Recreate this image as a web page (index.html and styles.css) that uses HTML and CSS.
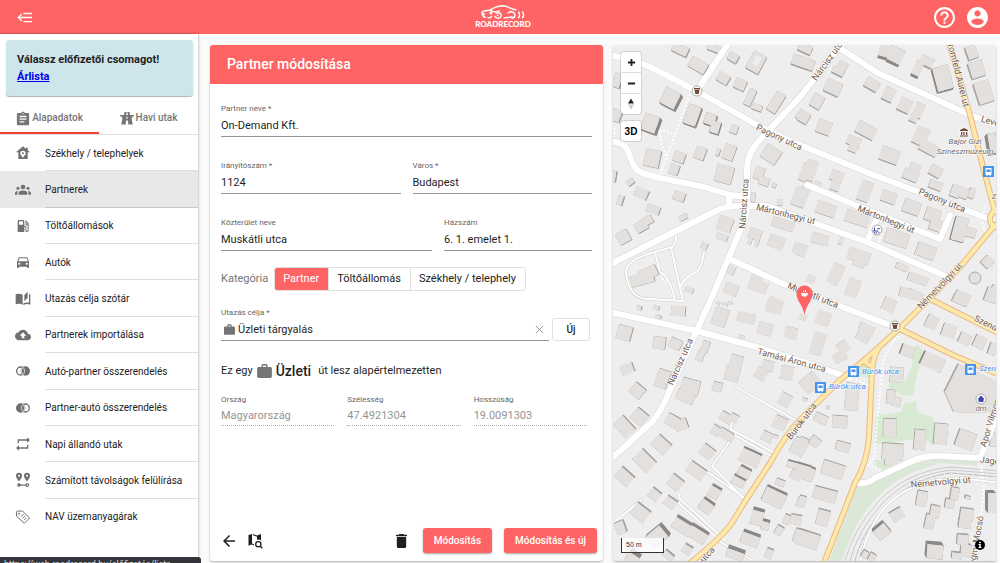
FILE: index.html
```html
<!DOCTYPE html>
<html lang="hu">
<head>
<meta charset="utf-8">
<meta name="viewport" content="width=device-width, initial-scale=1">
<title>RoadRecord – Partner módosítása</title>
<link rel="stylesheet" href="styles.css">
</head>
<body>
<header class="topbar">
  <button class="icon-btn menu-btn" aria-label="Menü bezárása">
    <svg viewBox="0 0 14 10" width="15" height="11" fill="none" stroke="currentColor" stroke-width="1.3"><path d="M6 1.2h8M1 5h13M6 8.8h8M4.600 1.800 1.200 5l3.400 3.200"/></svg>
  </button>
  <a class="logo" href="#">
    <svg viewBox="0 0 44 15" width="44" height="15" fill="none" stroke="currentColor" stroke-width="1.4" stroke-linecap="round"><path d="M11 5.300C6 5.400 2 5.800 1.200 7c-.5 3 .3 4.500 3.300 5.500M1.500 8.500l2 .5M8 5.200C13 3.500 14 1 21 .8c7 0 8 3.700 14 4M9.500 6.900c4 .3 7-.4 9-1M10 7.500c-1.500.7-1 1.500.5 1.300M10.500 11.500c-.7 1-2 1.500-3.500 1.300M15 8.500c3.500-2 6 .8 5 3-1 2.300-5 2.500-6 0M16.500 10.500h.5M23 12.700c4 .3 6-.2 8-1M27 8c3-2.500 7-.8 7 2 0 2-1.500 3-3 3.200M37.500 7c1.300 1.700 1.300 4 0 5.800M41.500 7c1.500 1.800 1.300 4 0 5.800"/></svg>
    <span>ROADRECORD</span>
  </a>
  <div class="top-actions">
    <button class="icon-btn" aria-label="Súgó"><svg viewBox="1 1 22 22" width="23" height="23" fill="currentColor"><path d="M11 18h2v-2h-2v2zm1-16C6.480 2 2 6.480 2 12s4.480 10 10 10 10-4.480 10-10S17.520 2 12 2zm0 18c-4.410 0-8-3.590-8-8s3.590-8 8-8 8 3.590 8 8-3.590 8-8 8zm0-14c-2.210 0-4 1.790-4 4h2c0-1.100.9-2 2-2s2 .9 2 2c0 2-3 1.750-3 5h2c0-2.250 3-2.500 3-5 0-2.210-1.790-4-4-4z"/></svg></button>
    <button class="icon-btn" aria-label="Fiók"><svg viewBox="1 1 22 22" width="23" height="23" fill="currentColor"><path d="M12 2C6.480 2 2 6.480 2 12s4.480 10 10 10 10-4.480 10-10S17.520 2 12 2zm0 3c1.660 0 3 1.340 3 3s-1.340 3-3 3-3-1.340-3-3 1.340-3 3-3zm0 14.200c-2.500 0-4.710-1.280-6-3.220.03-1.990 4-3.080 6-3.080 1.990 0 5.970 1.090 6 3.080-1.290 1.940-3.500 3.220-6 3.220z"/></svg></button>
  </div>
</header>

<div class="shell">
  <aside class="sidebar">
    <div class="notice"><strong>Válassz előfizetői csomagot!</strong><a href="#">Árlista</a></div>
    <div class="tabs">
      <button class="tab active"><svg viewBox="2 0 20 22" width="14" height="15" fill="currentColor"><path d="M19 3h-4.180C14.400 1.840 13.300 1 12 1s-2.400.84-2.820 2H5c-1.100 0-2 .9-2 2v14c0 1.100.9 2 2 2h14c1.100 0 2-.9 2-2V5c0-1.100-.9-2-2-2zm-7 0c.55 0 1 .45 1 1s-.45 1-1 1-1-.45-1-1 .45-1 1-1zm2 14H7v-2h7v2zm3-4H7v-2h10v2zm0-4H7V7h10v2z"/></svg>Alapadatok</button>
      <button class="tab"><svg viewBox="0 0 14 14" width="14" height="14" fill="currentColor"><path d="M4.500 1h1.800l-.2 3h1.800l-.2-3h1.800l.5 3H14v1.200h-1.800l.8 1.300h-1.600l1.300 7H8.300L8 9.500H6l-.3 4H1.300l1.300-7H1l.8-1.300H0V4h4zM6.700 1h.6v2h-.6zM6.500 5.500v2.500h1V5.500z"/></svg>Havi utak</button>
    </div>
    <nav class="menu" aria-label="Alapadatok">
      <a href="#"><svg viewBox="0 0 24 24"><path fill-rule="evenodd" d="M12 2 1.500 11H5v10h14V11h3.500L19 8V4h-3v1.500zM12 8.500a4 4 0 0 1 4 4c0 2.500-4 6.500-4 6.500s-4-4-4-6.500a4 4 0 0 1 4-4zM12 11a1.500 1.500 0 1 0 0 3 1.500 1.500 0 0 0 0-3z"/></svg><span>Székhely / telephelyek</span></a>
      <a href="#" class="current" aria-current="page"><svg viewBox="0 0 24 24"><circle cx="12" cy="7.500" r="3.500"/><circle cx="4.500" cy="9.500" r="2.300"/><circle cx="19.500" cy="9.500" r="2.300"/><path d="M5.500 19v-2.500c0-5 13-5 13 0V19zM0 19v-2c0-2 1.500-3 4.500-3.500C3.700 15 3.500 17 3.700 19zM24 19v-2c0-2-1.500-3-4.500-3.500.8 1.500 1 3.500.8 5.500z"/></svg><span>Partnerek</span></a>
      <a href="#"><svg viewBox="0 0 24 24"><path d="M19.770 7.230l.01-.01-3.720-3.720L15 4.560l2.110 2.110c-.94.36-1.610 1.260-1.610 2.330 0 1.380 1.120 2.500 2.500 2.500.36 0 .69-.08 1-.21v7.210c0 .55-.45 1-1 1s-1-.45-1-1V14c0-1.100-.9-2-2-2h-1V5c0-1.100-.9-2-2-2H6c-1.100 0-2 .9-2 2v16h10v-7.500h1.500v5c0 1.380 1.120 2.500 2.500 2.500s2.500-1.120 2.500-2.500V9c0-.69-.28-1.320-.73-1.770zM12 10H6V5h6v5zm6 0c-.55 0-1-.45-1-1s.45-1 1-1 1 .45 1 1-.45 1-1 1z"/></svg><span>Töltőállomások</span></a>
      <a href="#"><svg viewBox="0 0 24 24"><path fill-rule="evenodd" d="M18.920 6.010C18.720 5.420 18.160 5 17.500 5h-11c-.66 0-1.210.42-1.420 1.010L3 12v8c0 .55.45 1 1 1h1c.55 0 1-.45 1-1v-1h12v1c0 .55.45 1 1 1h1c.55 0 1-.45 1-1v-8l-2.080-5.990zM6.500 16c-.83 0-1.500-.67-1.500-1.500S5.670 13 6.500 13s1.500.67 1.500 1.500S7.330 16 6.500 16zm11 0c-.83 0-1.500-.67-1.500-1.500s.67-1.500 1.500-1.500 1.500.67 1.500 1.500-.67 1.500-1.500 1.500zM5 11l1.500-4.500h11L19 11H5z"/></svg><span>Autók</span></a>
      <a href="#"><svg viewBox="0 0 24 24"><path d="M1 5c4-1.500 7-1.200 10.500.5v15C8 18.800 5 18.700 1 20zM19 1l-5 5v9l5-4.500zM21 4.500l2 .8V20.500c-4-1.500-7-1-10.500.5v-2.500c3-1.200 5.500-1.500 8.500-1z"/></svg><span>Utazás célja szótár</span></a>
      <a href="#"><svg viewBox="0 0 24 24"><path d="M19.350 10.040C18.670 6.590 15.640 4 12 4 9.110 4 6.600 5.640 5.350 8.040 2.340 8.360 0 10.910 0 14c0 3.310 2.690 6 6 6h13c2.760 0 5-2.240 5-5 0-2.640-2.050-4.780-4.650-4.960zM14 13v4h-4v-4H7l5-5 5 5h-3z"/></svg><span>Partnerek importálása</span></a>
      <a href="#"><svg viewBox="0 0 24 24"><circle cx="8.500" cy="12" r="6" fill="none" stroke="#707070" stroke-width="2"/><circle cx="15.500" cy="12" r="7"/><path d="M12 6.500c3 3 3 8 0 11M12 6.500c-3 3-3 8 0 11" fill="none" stroke="#fff" stroke-width="1"/></svg><span>Autó-partner összerendelés</span></a>
      <a href="#"><svg viewBox="0 0 24 24"><circle cx="15.500" cy="12" r="6" fill="none" stroke="#707070" stroke-width="2"/><circle cx="8.500" cy="12" r="7"/><path d="M12 6.500c3 3 3 8 0 11M12 6.500c-3 3-3 8 0 11" fill="none" stroke="#fff" stroke-width="1"/></svg><span>Partner-autó összerendelés</span></a>
      <a href="#"><svg viewBox="0 0 24 24"><path d="M4 11V5h14V2l4.500 4L18 10V7H6v4zM20 13v6H6v3l-4.500-4L6 14v3h12v-4z"/></svg><span>Napi állandó utak</span></a>
      <a href="#"><svg viewBox="0 0 24 24"><path fill-rule="evenodd" d="M6 1a4.500 4.500 0 0 1 4.500 4.500C10.500 9 6 14 6 14S1.500 9 1.500 5.500A4.500 4.500 0 0 1 6 1zm0 3a1.500 1.500 0 1 0 0 3 1.500 1.500 0 0 0 0-3zM18 1a4.500 4.500 0 0 1 4.500 4.500C22.500 9 18 14 18 14s-4.500-5-4.500-8.500A4.500 4.500 0 0 1 18 1zm0 3a1.500 1.500 0 1 0 0 3 1.500 1.500 0 0 0 0-3zM6 17c1 0 2 .7 2.300 1.700h7.400a2.700 2.700 0 1 1 0 1.800H8.300A2.600 2.600 0 1 1 6 17zm12.200 1.500a1.100 1.100 0 1 0 0 2.200 1.100 1.100 0 0 0 0-2.200z"/></svg><span>Számított távolságok felülírása</span></a>
      <a href="#"><svg viewBox="0 0 24 24" class="outline"><path d="M2 4.500 3.500 3l8 .3L22 13.500l-8 8L2.500 11z"/><circle cx="6" cy="7" r="1"/><path d="m9 11 4-3M11.500 13.500l4-3M14 16l3-2.500"/></svg><span>NAV üzemanyagárak</span></a>
    </nav>
  </aside>

  <main class="content">
    <form class="card" onsubmit="return false">
      <h1 class="card-title">Partner módosítása</h1>
      <div class="card-body">
        <div class="rows">
          <div class="field"><label for="name">Partner neve *</label><input id="name" value="On-Demand Kft."></div>
          <div class="row halves">
            <div class="field"><label for="zip">Irányítószám *</label><input id="zip" value="1124"></div>
            <div class="field"><label for="city">Város *</label><input id="city" value="Budapest"></div>
          </div>
          <div class="row street">
            <div class="field"><label for="street">Közterület neve</label><input id="street" value="Muskátli utca"></div>
            <div class="field"><label for="house">Házszám</label><input id="house" value="6. 1. emelet 1."></div>
          </div>
        </div>
        <div class="category">
          <span id="cat">Kategória</span>
          <div class="toggle" role="group" aria-labelledby="cat">
            <button type="button" class="on" aria-pressed="true">Partner</button><button type="button" aria-pressed="false">Töltőállomás</button><button type="button" aria-pressed="false">Székhely / telephely</button>
          </div>
        </div>
        <div class="purpose">
          <div class="field">
            <label for="purpose">Utazás célja *</label>
            <div class="with-icons">
              <svg class="case" viewBox="2 2 20 19" width="11" height="11"><path d="M20 6h-4V4c0-1.110-.89-2-2-2h-4c-1.110 0-2 .89-2 2v2H4c-1.110 0-2 .89-2 2v11c0 1.110.89 2 2 2h16c1.110 0 2-.89 2-2V8c0-1.110-.89-2-2-2zm-6 0h-4V4h4v2z"/></svg>
              <input id="purpose" value="Üzleti tárgyalás">
              <button type="button" class="clear" aria-label="Törlés"><svg viewBox="0 0 10 10" width="9" height="9" fill="none" stroke="currentColor"><path d="m1 1 8 8M9 1 1 9"/></svg></button>
            </div>
          </div>
          <button type="button" class="new-btn">Új</button>
        </div>
        <p class="summary">Ez egy <svg class="case" viewBox="2 2 20 19" width="15" height="14"><path d="M20 6h-4V4c0-1.110-.89-2-2-2h-4c-1.110 0-2 .89-2 2v2H4c-1.110 0-2 .89-2 2v11c0 1.110.89 2 2 2h16c1.110 0 2-.89 2-2V8c0-1.110-.89-2-2-2zm-6 0h-4V4h4v2z"/></svg><strong>Üzleti</strong> <span>út lesz alapértelmezetten</span></p>
        <div class="row thirds">
          <div class="field"><label for="country">Ország</label><input id="country" value="Magyarország" disabled></div>
          <div class="field"><label for="lat">Szélesség</label><input id="lat" value="47.4921304" disabled></div>
          <div class="field"><label for="lng">Hosszúság</label><input id="lng" value="19.0091303" disabled></div>
        </div>
      </div>
      <div class="card-actions">
        <button type="button" class="icon-btn" aria-label="Vissza"><svg viewBox="4 4 16 16" width="12" height="12" fill="currentColor"><path d="M20 11H7.830l5.590-5.590L12 4l-8 8 8 8 1.410-1.410L7.830 13H20v-2z"/></svg></button>
        <button type="button" class="icon-btn" aria-label="Keresés térképen"><svg viewBox="0 0 16 16" width="16" height="16" fill="currentColor"><path d="M1.500 2 5 1v10.200l-3.500 1.600zM6 1l4 1.500v1.200L6 2.200zM10 2.500 14 1v6.500a4 4 0 0 0-4-.8zM5 10.500l2 .7v1.300l-2-.9z"/><path d="m13.300 13.300 2 2" stroke="currentColor" stroke-width="1.400"/><circle cx="11.300" cy="11.300" r="2.600" fill="none" stroke="currentColor" stroke-width="1.300"/></svg></button>
        <button type="button" class="icon-btn delete" aria-label="Törlés"><svg viewBox="5 3 14 18" width="11" height="14" fill="currentColor"><path d="M6 19c0 1.100.9 2 2 2h8c1.100 0 2-.9 2-2V7H6v12zM19 4h-3.500l-1-1h-5l-1 1H5v2h14V4z"/></svg></button>
        <button type="submit" class="primary">Módosítás</button>
        <button type="button" class="primary">Módosítás és új</button>
      </div>
    </form>

    <section class="map" aria-label="Térkép">
      <svg class="map-canvas" viewBox="613 45 383 516" preserveAspectRatio="xMidYMid slice">
        <defs>
          <path id="white-roads" d="M605 54Q635 60 650 67L697 91 757 125Q780 138 810 149L866 172 945 202 992 220M727 45 697 91M843 43 800 97 757 143Q747 155 747 170V205Q747 217 742 226L715 290 697 330 670 390Q662 410 652 422L610 460M605 140 620 143C633 148 628 168 642 173L660 178 704 187 730 195 747 197M605 267 674 232 720 209Q732 205 745 206H767L800 218 867 242 950 278M807 185 860 207 940 239 950 215M867 242 877 218M729 195V207M838 47 878 73 970 115 1000 126M732 260 790 287 837 305 895 327M605 311 697 331 760 348 807 363 850 378M855 483Q869 484 875 478L910 462Q925 455 940 456L980 458 1000 462M980 458 1000 408"/>
          <path id="small-roads" d="M674 233Q679 240 672 247L655 252Q625 260 626 273 629 300 650 299L683 301 671 247M655 252 660 272Q670 277 675 300M704 252Q702 265 698 271 680 280 680 290M736 387 797 421M715 424 773 457M732 423 730 429 773 452M735 434 712 466 745 500M690 460 745 498M670 495 717 538M678 492 680 499 725 540M605 530 641 500M717 540 752 560M1000 483 960 478 935 480Q905 487 887 505 869 524 860 561"/>
          <path id="yellow-roads" d="M948 40 962 87 970 115 983 167 995 212M995 225 960 267 928 300 900 328 878 348Q866 359 840 380L800 420Q787 433 770 463L744 503 732 523Q718 541 690 563M880 346Q873 355 872 372L869 437Q867 463 855 483L824 563M868 357Q862 364 873 366M898 328 953 355 1000 375M930 299 1000 334"/>
        </defs>
        <rect x="600" y="30" width="420" height="550" fill="#eeeeee"/>
        <g fill="#d9ead3">
          <path d="m918 345 5 6-5 21-5 23-10 1-15-9 2-5 16-1 7-19-3-10zM904 403l12-2 1 11 17 6 0 28-12-8-20 3-28 4 2-30 25-3zM875 460l16 0 3 7-10 4-8-3zM858 366l10-4 2 16-15-3z"/>
          <path d="M857 484 877 478 910 465 938 458 978 460 977 466 940 463 913 472Q885 485 868 508 851 530 842 562H829z" fill="#dbe8d8"/>
        </g>
        <g fill="none" stroke="#c9c9c9" stroke-width="1"><path d="M1000 471 950 467Q905 472 878 502 853 530 845 561M1000 474 951 470Q908 475 881 505 857 532 850 561"/><path d="M1000 477 951 473Q911 478 884 508 861 535 855 561" stroke="#b9b9b9" stroke-dasharray="6 1"/></g>
        <g fill="none" stroke="#fff" stroke-width="2" stroke-dasharray="2 2"><path d="M690 94 660 175M659 130 675 134M659 131 662 145 667 158M662 279 670 285 673 300M899 336Q882 350 881 380L874 458 868 465 884 471M887 218 878 245M985 207 981 220 987 235M849 375 868 386M981 465 984 487 980 525M614 128 615 135"/></g>
        <g fill="none" stroke-linejoin="round" stroke-linecap="round">
          <use href="#small-roads" stroke="#cfcdca" stroke-width="3"/><use href="#small-roads" stroke="#fff" stroke-width="2"/>
          <use href="#white-roads" stroke="#d9d7d5" stroke-width="7"/>
        </g>
        <g id="buildings"></g>
        <g fill="none" stroke-linejoin="round" stroke-linecap="round">
          <use href="#white-roads" stroke="#fff" stroke-width="6"/>
          <g stroke="#e9b784" stroke-width="6"><use href="#yellow-roads"/><circle cx="999" cy="219" r="9"/></g>
          <g stroke="#fde9a9" stroke-width="4"><use href="#yellow-roads"/><circle cx="999" cy="219" r="9"/></g>
        </g>
        <g class="street-names" text-anchor="middle">
          <text transform="translate(778 140) rotate(25)">Pagony utca</text>
          <text transform="translate(941 203) rotate(22)">Pagony utca</text>
          <text transform="translate(785 217) rotate(14)">Mártonhegyi út</text>
          <text transform="translate(885 222) rotate(22)">Mártonhegyi út</text>
          <text transform="translate(747 204) rotate(-86)">Nárcisz utca</text>
          <text transform="translate(831 61) rotate(-54)">Nárcisz utca</text>
          <text transform="translate(683 363) rotate(-66)">Nárcisz utca</text>
          <text transform="translate(812 298) rotate(22)">Muskátli utca</text>
          <text transform="translate(791 363) rotate(15)">Tamási Áron utca</text>
          <text transform="translate(804 423) rotate(-53)">Bürök utca</text>
          <text transform="translate(701 566) rotate(-48)">Bürök utca</text>
          <text transform="translate(942 288) rotate(-46)">Németvölgyi út</text>
          <text transform="translate(955 73) rotate(76)">Gromfeld Aurél út</text>
          <text transform="translate(1000 127) rotate(16)">Levendula</text>
          <text transform="translate(997 332) rotate(26)">Szendrő utca</text>
          <text transform="translate(941 485) rotate(-5)">Németvölgyi út</text>
          <text transform="translate(994 464) rotate(7)">Jagelló</text>
          <text transform="translate(993 424) rotate(-73)">Apor Vilmos</text>
          <text transform="translate(978 548) rotate(-80)">Süvegmi Mocsó</text>
        </g>
        <g class="poi" text-anchor="middle">
          <text x="965" y="144">Bajor Gizi</text><text x="965" y="154">Színészmúzeum</text><text x="981" y="411">dm</text><text x="994" y="199">Z</text>
        </g>
        <g class="stops"><text x="862" y="374">Bürök utca</text><text x="829" y="389">Bürök utca</text><text x="979" y="371">Szendrő</text></g>
        <g fill="#fff" stroke="#aaa" stroke-width="1"><circle cx="697" cy="91" r="5"/><circle cx="895" cy="326" r="5"/><circle cx="877" cy="230" r="5"/><circle cx="981" cy="399" r="5"/></g>
        <circle cx="964" cy="132" r="5" fill="#f8f8f8"/>
        <g fill="#734a38"><path id="cup" d="M694 88h6v1.500h-6zM694.500 90h5l-.8 4h-3.400z"/><use href="#cup" x="198" y="235"/><path d="m964 128 4 2v1h-8v-1zM961 132h1.300v3H961zM963.400 132h1.300v3h-1.300zM966 132h1.300v3H966zM960 135.500h8v1h-8z"/></g>
        <g fill="#4149ad"><path d="M978 398h6l-.7 4h-4.600zM979 398l1-2h2l1 2" /><path d="M874.500 227.500v3.500h3l2 2.500M874 230q-1 3.500 3 3M877 229l3-.5" fill="none" stroke="#4149ad"/></g>
        <g id="bus"><rect x="848" y="366" width="11" height="11" fill="#4594ef"/><path fill="#fff" fill-rule="evenodd" d="M850.500 368h6v7h-1v1h-1v-1h-2v1h-1v-1h-1zm1 1.500v2.500h4v-2.500z"/></g>
        <use href="#bus" x="-33" y="16"/><use href="#bus" x="117" y="-2"/><use href="#bus" x="135" y="-200"/>
        <path d="M804.500 315C802.500 304 796.500 301 796.500 293.500a8 8 0 0 1 16 0c0 7.500-6 10.500-8 21.500z" fill="#ff6464"/>
        <path d="M801 293h7c0 5-7 5-7 0zM803 291h1v1h-1zM805 290h1v2h-1z" fill="#fff"/>
      </svg>
      <div class="map-controls">
        <div class="control-group">
          <button aria-label="Nagyítás"><svg viewBox="0 0 10 10" width="9" height="9" stroke="#222" stroke-width="2"><path d="M1 5h8M5 1v8"/></svg></button>
          <button aria-label="Kicsinyítés"><svg viewBox="0 0 10 10" width="9" height="9" stroke="#222" stroke-width="2"><path d="M1 5h8"/></svg></button>
          <button aria-label="Észak"><svg viewBox="0 0 6 12" width="6" height="12"><path d="m0 5.500 3-5 3 5z" fill="#222"/><path d="m0 6.500 3 5 3-5z" fill="#ccc"/></svg></button>
        </div>
        <button class="control-group three-d">3D</button>
      </div>
      <div class="scale">50 m</div>
      <button class="attribution" aria-label="Forrás"><svg viewBox="0 0 10 10" width="10" height="10"><circle cx="5" cy="5" r="5" fill="#000"/><path d="M4.200 1.700h1.600v1.500H4.200zM3.500 4h2.300v3h.7v1h-3V7h.8V5h-.8z" fill="#fff"/></svg></button>
    </section>
  </main>
</div>
<div class="status">https://web.roadrecord.hu/előfizetés/lista</div>
<script src="map.js"></script>
</body>
</html>
```
FILE: styles.css
```css
* { box-sizing: border-box; }
body { margin: 0; height: 100vh; display: flex; flex-direction: column; overflow: hidden; background: #fafafa; color: #1f1f1f; font: 11px/16px Roboto, sans-serif; }
button, input { font: inherit; color: inherit; }
button { cursor: pointer; }
.icon-btn { display: flex; align-items: center; justify-content: center; padding: 0; border: 0; background: none; }

.topbar { flex: none; height: 34px; display: grid; grid-template-columns: 1fr auto 1fr; align-items: center; padding: 0 11px 0 17px; background: #ff6464; color: #fff; }
.menu-btn { justify-self: start; }
.logo { display: flex; flex-direction: column; align-items: center; color: #fff; text-decoration: none; font: 900 8px/9px Lato, sans-serif; }
.top-actions { display: flex; gap: 10px; justify-content: flex-end; }

.shell { flex: 1; min-height: 0; display: flex; }
.sidebar { flex: none; width: 198px; display: flex; flex-direction: column; background: #fff; box-shadow: 0 0 3px rgba(0,0,0,.35); }
.notice { flex: none; min-height: 56px; margin: 6px 5px 0 6px; padding: 11px; display: flex; flex-direction: column; align-items: flex-start; line-height: 17px; font-weight: 500; background: #cfe5ec; border-radius: 3px; box-shadow: 0 1px 1px rgba(0,0,0,.3); }
.notice strong { font-size: 12px; font-size: 11px; font-weight: 700; }
.notice a { color: #0000ee; font-weight: 700; }
.tabs { flex: none; display: flex; margin-top: 5px; height: 34px; border-bottom: 1px solid #e0e0e0; }
.tab { flex: 1; display: flex; align-items: center; justify-content: center; gap: 2px; padding: 3px 0 0; border: 0; border-bottom: 2px solid transparent; background: none; color: #757575; font-size: 10px; font-weight: 500; }
.tab.active { border-bottom-color: #f44336; }
.menu { flex: 0 1 400px; display: grid; grid-auto-rows: 1fr; }
.menu a { position: relative; display: grid; grid-template-columns: 45px 1fr; align-items: stretch; color: #212121; text-decoration: none; font-size: 10px; }
.menu svg { width: 16px; height: 16px; align-self: center; justify-self: center; fill: #707070; }
.menu .outline { fill: none; stroke: #707070; stroke-width: 1.5; }
.menu span { display: flex; align-items: center; padding-top: 2px; border-bottom: 1px solid #dedede; }
.menu a:last-child span { border-bottom: 0; padding-top: 0; }
.menu .current { background: #e8e8e8; }
.menu .current span { border-bottom-color: #c8c8c8; }

.content { flex: 1; min-width: 0; display: grid; grid-template-columns: 393fr 383fr; gap: 10px; padding: 11px 4px 2px 12px; }
.card { min-width: 0; display: flex; flex-direction: column; background: #fff; border-radius: 3px; box-shadow: 0 1px 2px rgba(0,0,0,.3); }
.card-title { margin: 0; padding: 9px 17px 10px; font-size: 14px; line-height: 20px; font-weight: 500; color: #fff; background: #ff6464; border-radius: 3px 3px 0 0; }
.card-body { flex: 1; padding: 20px 11px 0; }
.rows { display: flex; flex-direction: column; gap: 24px; }
.row { display: grid; gap: 12px; }
.halves { grid-template-columns: 1fr 1fr; }
.street { grid-template-columns: 211fr 148fr; }
.thirds { grid-template-columns: 1fr 1fr 1fr; gap: 13px; margin-right: 5px; }
.field { min-width: 0; display: flex; flex-direction: column; }
.field label { font-size: 8px; line-height: 10px; color: #666; }
.field input { width: 100%; min-width: 0; height: 23px; padding: 0; border: 0; border-bottom: 1px solid #949494; border-radius: 0; background: none; outline: 0; }
.thirds .field input { height: 21px; border-bottom: 1px dotted #aaa; color: #949494; }
.category { display: flex; align-items: center; gap: 6px; margin-top: 16px; color: #757575; }
.toggle { display: flex; border: 1px solid #e0e0e0; border-radius: 3px; overflow: hidden; }
.toggle button { padding: 0 9px 0 8px; height: 22px; border: 0; border-left: 1px solid #e0e0e0; background: #fff; color: #212121; }
.toggle button:first-child { border-left: 0; }
.toggle .on { background: #ff6464; color: #fff; }
.purpose { display: flex; align-items: flex-end; gap: 3px; margin-top: 17px; padding-right: 2px; }
.purpose .field { flex: 1; }
.with-icons { display: flex; align-items: center; gap: 3px; padding-left: 3px; border-bottom: 1px solid #949494; }
.purpose .with-icons input { flex: 1; height: 22px; border: 0; }
.case { flex: none; fill: #757575; }
.clear { display: flex; padding: 0 5px; border: 0; background: none; color: #888; }
.new-btn { width: 38px; height: 23px; padding: 0; border: 1px solid #e0e0e0; border-radius: 3px; background: #fff; font-size: 10px; font-weight: 500; }
.summary { display: flex; align-items: center; gap: 4px; margin: 20px 0 14px; line-height: 20px; }
.summary strong { font-size: 14px; font-weight: 500; }
.summary span { padding-left: 3px; }
.card-actions { display: flex; align-items: center; gap: 12px; padding: 0 6px 8px 13px; }
.card-actions .delete { margin-left: auto; margin-right: 4px; }
.primary { height: 25px; padding: 0 11px; border: 0; border-radius: 3px; background: #ff6464; color: #fff; font-size: 10px; font-weight: 500; box-shadow: 0 1px 2px rgba(0,0,0,.35); }

.map { position: relative; min-width: 0; overflow: hidden; background: #eee; border-radius: 3px; box-shadow: 0 1px 2px rgba(0,0,0,.3); }
.map-canvas { position: absolute; inset: 0; width: 100%; height: 100%; }
.street-names { font-size: 9px; fill: #70584a; paint-order: stroke; stroke: #fff; stroke-width: 1px; }
.poi { font-size: 8px; font-style: italic; fill: #696969; paint-order: stroke; stroke: #fff; stroke-width: 1px; }
.stops { font-size: 8px; font-style: italic; fill: #3e8ded; paint-order: stroke; stroke: #fff; stroke-width: 1px; }
.map-controls { position: absolute; top: 7px; left: 8px; display: flex; flex-direction: column; gap: 7px; }
.control-group { width: 20px; padding: 0; border: 0; border-radius: 3px; background: #fff; box-shadow: 0 0 0 1px rgba(0,0,0,.12); overflow: hidden; }
.control-group button { display: flex; align-items: center; justify-content: center; width: 20px; height: 20px; padding: 0; border: 0; background: none; }
.control-group button + button { height: 21px; border-top: 1px solid #ddd; }
.three-d { height: 20px; font: 700 10px "Liberation Sans", sans-serif; color: #000; }
.scale { position: absolute; left: 8px; bottom: 8px; width: 43px; height: 15px; padding-left: 4px; border: 1px solid #333; border-top: 0; background: rgba(255,255,255,.75); font: 7px/14px "Liberation Sans", sans-serif; color: #333; }
.attribution { position: absolute; right: 11px; bottom: 11px; display: flex; padding: 0; border: 0; background: none; }
.status { position: fixed; left: 0; bottom: 0; width: 201px; height: 6px; padding-left: 4px; overflow: hidden; white-space: nowrap; background: #34353a; border-radius: 0 3px 0 0; color: #d8d8d8; font-size: 9px; line-height: 15px; }
```
FILE: map.js
```js
// Building footprints: centre x, centre y, width, height, rotation, wall height
const buildings = [
[680,49,16,9,25],[698,65,18,11,30],[733,57,10,8,30],[756,62,14,19,28],[723,78,12,9,30],[740,84,11,10,25],[750,97,7,17,25],[757,107,10,6,20],[776,102,10,21,32],[800,61,16,10,20],[803,116,12,10,35],
[670,98,16,17,27,2],[650,123,15,17,20,2],[692,115,13,20,20,1.5],[710,119,11,11,18,1.5],[715,127,9,12,18,1.5],[734,129,7,8,20],[652,158,15,17,12],[679,157,11,10,20],[674,169,9,10,20],[700,153,10,12,20],[729,152,11,15,20],[718,152,3,7,20],[724,174,17,17,15],[771,154,17,15,33],[759,173,9,12,20],[764,181,10,8,20],[774,185,4,4,20],[799,197,12,18,20],[805,172,8,18,20],
[641,193,13,10,25],[630,182,7,5,-40],[653,209,13,8,20],[679,196,11,9,20],[641,226,12,10,-30],[648,220,8,8,-30],[623,237,12,12,-30],[683,217,8,5,-25],[704,246,6,7,25],[642,279,23,11,-15],[648,273,18,11,-25],[725,224,14,14,20],[722,237,11,6,20],[755,234,12,11,20],[750,241,3,7,20],[757,243,3,7,20],[776,242,15,12,22],[783,224,22,9,18],[799,249,12,10,22],[731,289,13,12,22],[758,286,18,12,22],[756,279,10,6,22],[731,270,7,10,22],[775,304,15,12,22],[689,290,8,5,20],[617,80,8,14,20],[616,115,9,12,20],[620,200,5,10,18],[613,176,5,11,10],[753,197,4,9,5],[780,202,5,6,5],[714,48,13,6,20],
[805,48,14,8,25],[806,63,16,10,20],[888,51,17,13,15,1.5],[896,55,14,15,25,1.5],[918,68,8,15,25,1.5],[927,61,14,9,25],[943,78,16,24,-15,1.4],[972,52,10,13,-20],[977,69,14,16,-18],[984,92,15,22,-18],[993,143,8,20,-10,2],[841,68,9,14,30],[838,71,12,6,25],[833,87,16,13,25],[817,101,11,13,30],[804,117,10,11,30],[824,127,14,13,20],[872,84,14,10,30],[889,94,11,13,25],[905,105,13,13,25],[919,110,9,14,25],[914,118,8,7,25],[866,130,20,12,28],[854,141,14,9,22],[853,148,9,7,22],[890,155,19,14,20],[921,136,13,17,25],[929,148,19,10,28],[915,168,11,9,22],[911,175,15,10,22],[936,171,12,10,30],[936,185,13,8,22],
[810,170,11,20,18],[802,197,9,20,20],[837,176,13,10,20],[836,184,9,13,20],[826,209,20,12,18],[865,191,12,20,20],[857,218,24,12,18],[818,184,7,5,20],[889,197,15,11,20],[912,207,17,13,20],[933,215,15,13,20],[936,225,12,11,20],[956,191,9,12,20],[964,193,9,10,20],[972,193,6,10,20],[960,229,13,24,15,1.4],[970,232,12,9,15],[897,238,24,14,18],[926,251,19,13,20],[820,239,18,10,15],[841,241,5,7,20],[859,256,22,12,18],[859,263,12,7,18],[836,274,12,21,25],[853,288,12,18,20],[802,250,9,12,20],[811,279,9,7,20],[918,279,20,8,20],[907,293,14,9,15],[902,267,12,6,22],[988,262,10,10,-45],[962,298,15,12,25],[994,291,6,12,25],
[624,333,14,14,15],[659,343,12,12,8],[675,344,12,10,25],[678,311,14,10,5],[639,308,4,4,15],[656,308,5,4,15],[658,317,5,3,15],[705,347,7,12,20],[700,356,7,10,20],[720,317,14,18,20],[718,303,3,3,20],[725,304,5,3,20],[730,303,4,3,20],[746,318,17,10,15],[765,329,14,12,15],[774,307,15,12,15],[791,333,13,11,15],[741,337,6,3,15],[736,362,12,13,15],[732,374,14,14,15],[717,387,9,9,15],[768,366,12,10,15],[761,374,12,11,30],[787,373,13,13,10],[627,369,12,10,-20],[662,379,12,18,20],[690,387,18,15,15],[685,397,18,10,25],[637,391,13,12,40],[639,417,14,13,40],[624,427,19,13,47],[672,421,13,11,28],[681,425,12,10,-20],[661,445,17,13,42],[644,461,20,14,45],[624,477,17,12,42],[675,483,14,12,38],[654,495,11,10,38],[640,513,17,13,38],[707,452,14,11,38],[696,471,19,11,35],[726,418,13,9,30],[734,418,9,7,30],[716,431,10,9,32],[726,435,15,8,32],
[750,458,20,13,25,1.8],[744,473,12,9,28,1.8],[738,482,13,8,28,1.8],[714,493,11,11,30,1.7],[706,507,13,11,35,1.7],[682,527,20,11,32,1.7],[697,535,20,11,32,1.7],[657,537,18,15,-40,2],[670,503,12,9,35],[687,550,9,8,30],[774,498,22,15,25,1.8],[757,518,12,14,15,2],[765,526,8,8,15,1.8],[750,540,18,11,20,1.8],[735,555,18,8,20,2],[780,423,13,12,25],[785,400,11,12,30],[767,437,11,9,25],[776,437,4,3,25],[799,447,14,16,30],[799,467,24,6,15,1.5],[796,475,10,9,25],[780,483,9,6,20],[800,503,6,8,20],[787,520,6,9,20],[796,520,11,9,10],[779,531,7,9,30],[800,537,12,13,20],[769,554,7,9,20],[620,528,9,12,-20],[632,559,12,9,35,2],[668,556,11,6,40],
[823,318,14,14,20],[803,317,8,6,20],[820,336,12,6,15],[817,347,12,16,15],[843,347,12,10,-35],[840,357,14,9,-30],[867,328,15,8,25],[863,337,13,10,30],[889,305,12,13,25],[916,295,15,8,25],[932,322,11,13,25],[949,331,13,13,20],[965,339,11,11,25],[980,342,11,12,25],[993,349,7,12,20],[960,300,14,8,25],[992,295,12,14,20],[908,351,13,11,20,1.8],[933,362,22,14,25,1.8],[897,375,13,15,5],[891,397,8,14,5],[897,402,8,9,15],[890,428,13,18,2],[893,452,21,16,4],[891,462,12,8,5],[920,440,11,20,5],[941,434,13,20,5],[966,440,18,17,20],[852,397,13,27,5],[810,383,18,15,-40],[840,422,15,12,5],[821,419,13,9,25],[843,447,14,9,15],[815,442,9,10,-50],[803,443,8,10,25],[805,400,5,3,20],[828,408,3,3,20],[833,470,22,14,18],[805,473,18,13,20,1.8],[825,495,23,12,15],[823,518,12,15,15],[808,540,22,15,18],[802,502,7,11,15],
[922,499,10,15,10],[935,512,9,12,12],[930,522,9,14,12],[955,494,8,12,10],[950,504,9,9,10],[967,515,13,12,8],[965,524,12,9,8],[897,515,13,10,-30],[882,532,14,12,-40,1.8],[935,552,16,14,5,2],[963,540,11,10,5],[966,551,10,12,5],[957,556,10,6,5],[865,555,6,7,30],[872,558,6,8,30],[992,503,8,20,0,2],[968,498,5,3,15],[994,440,6,13,10]];

const focus = { x: 805, y: 300 };
const ns = "http://www.w3.org/2000/svg";
const layer = document.getElementById("buildings");

function outline(x, y, w, h, angle, dx, dy) {
  const a = angle * Math.PI / 180, c = Math.cos(a), s = Math.sin(a);
  return [[-1, -1], [1, -1], [1, 1], [-1, 1]].map(([u, v]) => {
    const px = u * w / 2, py = v * h / 2;
    return [x + px * c - py * s + dx, y + px * s + py * c + dy];
  });
}
function polygon(points, fill) {
  const p = document.createElementNS(ns, "polygon");
  p.setAttribute("points", points.map(q => q.map(n => n.toFixed(1)).join()).join(" "));
  p.setAttribute("fill", fill);
  layer.append(p);
}
function extrude(points, height) {
  const k = 0.008 * height;
  const base = points.map(([x, y]) => [x + (focus.x - x) * k, y + (focus.y - y) * k]);
  points.forEach((p, i) => {
    const j = (i + 1) % points.length;
    polygon([p, points[j], base[j], base[i]], height > 1.3 ? "#8b8886" : "#a5a2a0");
  });
}
const shapes = buildings.map(([x, y, w, h, a, t = 1]) => ({ pts: outline(x, y, w, h, a, 0, 0), t }));
shapes.push({ pts: [[959,364],[998,381],[998,410],[982,413],[954,412],[945,392]], t: 1.3 });
shapes.forEach(s => extrude(s.pts, s.t));
shapes.forEach(s => polygon(s.pts, "#e4e0de"));
polygon(outline(757, 61, 6, 9, 28, 0, 0), "#eeeeee");
const round = document.createElementNS(ns, "circle");
round.setAttribute("cx", 975); round.setAttribute("cy", 278); round.setAttribute("r", 6);
round.setAttribute("fill", "#e4e0de"); round.setAttribute("stroke", "#aaa");
layer.append(round);
```
